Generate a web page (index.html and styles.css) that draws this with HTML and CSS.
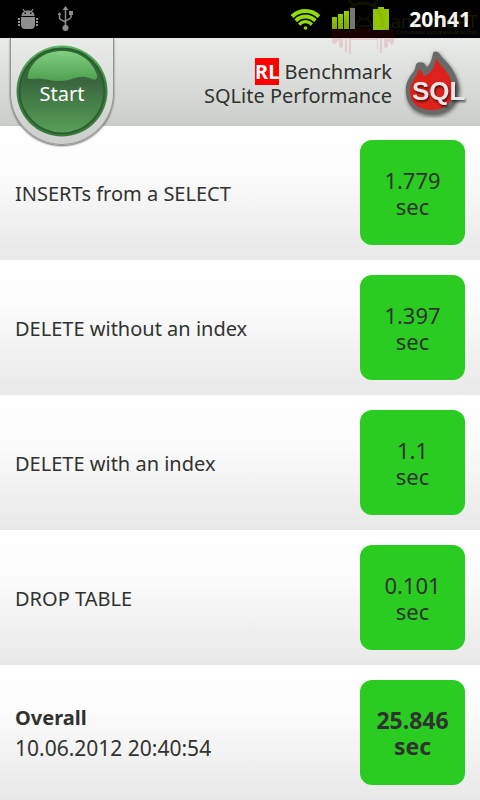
FILE: index.html
```html
<!DOCTYPE html>
<html lang="en">

<head>
    <meta charset="UTF-8">
    <meta name="viewport" content="width=device-width, initial-scale=1.0">
    <title>RL Benchmark: SQLite Performance</title>
    <link rel="stylesheet" href="styles.css">
</head>

<body>

    <div class="status-bar">
        <svg class="status-debug" width="20" height="22" viewBox="0 0 20 22" fill="#8e8e8e" aria-hidden="true">
            <path d="M5 1l2 3M15 1l-2 3" stroke="#8e8e8e" stroke-width="1.2"/>
            <path d="M3.500 8c0-3.500 2.500-5.500 6.500-5.500s6.500 2 6.500 5.500z"/>
            <path d="M3 9h14v8c0 2.500-2 4-4 4H7c-2 0-4-1.500-4-4z"/>
            <path d="M0 10h2v2H0zM0 13h2v2H0zM0 16h2v2H0zM18 10h2v2h-2zM18 13h2v2h-2zM18 16h2v2h-2z"/>
            <path d="M6.500 4.500H8V6H6.500zM12 4.500h1.500V6H12z" fill="#000"/>
        </svg>
        <svg class="status-usb" width="18" height="26" viewBox="0 0 18 26" fill="#8e8e8e" aria-hidden="true">
            <path d="M8.500 3v18M2.500 8v4c0 3 6 2 6 5M14 7v4c0 3-5.500 2-5.500 5" fill="none" stroke="#8e8e8e" stroke-width="1.500"/>
            <path d="M8.500 0l3 4h-6zM2.500 6l2 3h-4zM12 5h4v4h-4z"/>
            <circle cx="8.500" cy="22" r="3"/>
        </svg>
        <span class="status-space"></span>
        <svg class="status-wifi" width="30" height="24" viewBox="0 0 30 24" aria-hidden="true">
            <clipPath id="wedge">
                <path d="M14.500 25L-2 6V0h33v6z"/>
            </clipPath>
            <g clip-path="url(#wedge)" fill="none" stroke="#94dc08">
                <circle cx="14.500" cy="23" r="19" stroke-width="4"/>
                <circle cx="14.500" cy="23" r="13.500" stroke-width="3.800"/>
                <circle cx="14.500" cy="23" r="8.300" stroke-width="3.200"/>
            </g>
            <circle cx="14.500" cy="21" r="1.800" fill="#94dc08"/>
        </svg>
        <svg class="status-signal" width="24" height="22" viewBox="0 0 24 22" aria-hidden="true">
            <linearGradient id="lime" x1="0" y1="0" x2="0" y2="1">
                <stop offset="0" stop-color="#9ad60c"/>
                <stop offset="1" stop-color="#7cac06"/>
            </linearGradient>
            <path d="M0 9h5v12H0zM6 6h5v15H6zM12 3h5v18h-5z" fill="url(#lime)"/>
            <path d="M18 0h5v21h-5z" fill="#777"/>
        </svg>
        <svg class="status-battery" width="16" height="24" viewBox="0 0 16 24" aria-hidden="true">
            <path d="M5 0h6v2h5v21H0V2h5z" fill="#8fc400"/>
        </svg>
        <span class="clock">20h41</span>
    </div>

    <svg class="watermark" width="150" height="56" viewBox="0 0 150 56" aria-hidden="true">
        <g fill="none" stroke="#6d7a00" stroke-width="3" opacity="0.14">
            <path d="M16 27c-2-14 5-24 17-24s21 10 19 24M19 0l5 6M48 0l-5 6"/>
            <path d="M27 26c0-10 14-10 14 0zM29 16l2 3M39 16l-2 3" stroke-width="2"/>
        </g>
        <g fill="#d00018" opacity="0.12">
            <path d="M1 29c8-3 13 4 20 2 6-4 18-4 26 0 6 0 8-4 17-2v13c0 4-4 4-4 0h-2v3c0 4-4 4-4 0v-6h-2v14h-2V39h-2v10h-1V40H21v14h-2V39h-2v13h-2V39h-2v6c0 4-4 4-4 0v-4H7c0 4-5 4-5 0z"/>
        </g>
        <text class="watermark-name" x="61" y="28">androidPT</text>
        <text class="watermark-line" x="67" y="34">Comunidade portuguesa de android</text>
    </svg>

    <header>
        <button class="start-btn" type="button">
            <svg class="orb" width="92" height="92" viewBox="0 0 92 92" aria-hidden="true">
                <linearGradient id="rim" x1="0" y1="0" x2="0" y2="1">
                    <stop offset="0" stop-color="#5db463"/>
                    <stop offset="0.5" stop-color="#3f8044"/>
                    <stop offset="1" stop-color="#3c7a3f"/>
                </linearGradient>
                <linearGradient id="glass" x1="0" y1="0" x2="0" y2="1">
                    <stop offset="0" stop-color="#2e6a33"/>
                    <stop offset="0.4" stop-color="#3a673d"/>
                    <stop offset="1" stop-color="#58a159"/>
                </linearGradient>
                <linearGradient id="shine" x1="0" y1="0" x2="0" y2="1">
                    <stop offset="0" stop-color="#80cf80"/>
                    <stop offset="1" stop-color="#4ea04f"/>
                </linearGradient>
                <circle cx="46" cy="46" r="45.500" fill="url(#rim)"/>
                <circle cx="46" cy="46" r="42.500" fill="url(#glass)" stroke="#2c5f30" stroke-width="2"/>
                <path d="M12 30C16 15 29 6 46 6s30 9 35 24c1 4-2 6-5 4-14-6-18 2-32 2-12 0-18-4-29-2-3 0-4-1-3-4z" fill="url(#shine)"/>
            </svg>
            <span class="start-label">Start</span>
        </button>
        <h1><span class="brand">RL</span> Benchmark<br>SQLite Performance</h1>
        <svg class="logo" width="64" height="68" viewBox="0 0 64 68" role="img" aria-label="SQL">
            <path class="flame-edge" d="M29 3c1-2 4-2 6 0 3 5 9 9 13 16 5 8 8 16 6 25-2 12-12 20-25 20C12 64 3 56 2 43c-1-10 3-16 8-22 2-3 1-6 3-8 2-1 5-1 7 0l3 4c4-3 5-9 6-14z"/>
            <path d="M32 8c4 8 11 12 14 20 8 18-1 32-17 32C13 60 6 52 6 42c0-11 7-14 9-23 3 2 4 3 4 7 8-1 12-9 13-18z" fill="#df211b"/>
            <text class="logo-text" x="8" y="50">SQL</text>
        </svg>
    </header>

    <table class="results">
        <tbody>
            <tr>
                <th scope="row">INSERTs from a SELECT</th>
                <td><div class="time">1.779<br>sec</div></td>
            </tr>
            <tr>
                <th scope="row">DELETE without an index</th>
                <td><div class="time">1.397<br>sec</div></td>
            </tr>
            <tr>
                <th scope="row">DELETE with an index</th>
                <td><div class="time">1.1<br>sec</div></td>
            </tr>
            <tr>
                <th scope="row">DROP TABLE</th>
                <td><div class="time">0.101<br>sec</div></td>
            </tr>
            <tr class="overall">
                <th scope="row"><strong>Overall</strong><br><span class="date">10.06.2012 20:40:54</span></th>
                <td><div class="time">25.846<br>sec</div></td>
            </tr>
        </tbody>
    </table>

</body>

</html>
```

FILE: styles.css
```css
body {
    font-family: "Noto Sans", sans-serif;
    font-size: 20px;
    color: #303230;
    background-color: #fff;
    margin: 0;
    position: relative;
}

.status-bar {
    display: flex;
    align-items: center;
    height: 38px;
    padding: 0 9px 0 18px;
    box-sizing: border-box;
    background-color: #000;
    color: #fff;
}

.status-usb {
    margin-left: 19px;
}

.status-space {
    flex: 1;
}

.status-signal {
    margin-left: 11px;
}

.status-battery {
    margin-left: 17px;
}

.clock {
    margin-left: 20px;
    font-size: 21px;
    font-weight: bold;
}

/* faint badge that runs over the status bar and the header */
.watermark {
    position: absolute;
    top: 0;
    right: 0;
    z-index: 1;
    pointer-events: none;
}

.watermark-name {
    font-size: 18px;
    fill: #6d7a00;
    opacity: 0.2;
}

.watermark-line {
    font-family: "Liberation Sans", sans-serif;
    font-size: 5px;
    fill: #6d7a00;
    opacity: 0.3;
}

header {
    display: flex;
    align-items: center;
    justify-content: flex-end;
    gap: 12px;
    height: 87px;
    padding: 4px 12px 0 0;
    position: relative;
    box-sizing: border-box;
    background: linear-gradient(#e8ebe8, #cccecb);
    box-shadow: 0 1px #c9cbc8;
}

h1 {
    margin: 0;
    font-size: 20px;
    font-weight: normal;
    line-height: 24px;
    text-align: right;
}

.brand {
    background-color: #f00;
    color: #fff;
    font-weight: bold;
}

.flame-edge {
    fill: #686a69;
    filter: drop-shadow(1px 2px 2px rgba(0, 0, 0, 0.6));
}

.logo-text {
    font-family: "Liberation Sans", sans-serif;
    font-size: 26px;
    font-weight: bold;
    fill: #e6e6ea;
    filter: drop-shadow(1px 2px 1px rgba(0, 0, 0, 0.6));
}

/* hangs below the header, over the first row */
.start-btn {
    display: grid;
    place-items: center;
    position: absolute;
    top: 0;
    left: 10px;
    width: 104px;
    height: 107px;
    padding: 0;
    border: 1px solid #949694;
    border-top: 0;
    border-radius: 0 0 52px 52px;
    background: linear-gradient(#e8ebe8, #cccecb);
    box-shadow: 0 1px 2px rgba(0, 0, 0, 0.6);
    clip-path: inset(0 -4px -4px);
    color: #fff;
    font-family: inherit;
    font-size: 20px;
    cursor: pointer;
}

.orb,
.start-label {
    grid-area: 1 / 1;
}

.start-label {
    padding-top: 4px;
}

.results {
    width: 100%;
    border-collapse: collapse;
}

.results tr {
    background: linear-gradient(#fff, #fcfcfc 33%, #e8e8e8);
}

.results th {
    padding: 2px 15px 0;
    font-weight: normal;
    line-height: 30px;
    text-align: left;
}

.results td {
    width: 105px;
    padding: 15px;
}

.time {
    display: flex;
    align-items: center;
    justify-content: center;
    height: 105px;
    border-radius: 12px;
    background-color: #2bcc22;
    font-size: 22px;
    line-height: 26px;
    text-align: center;
}

.date {
    font-size: 21px;
}

.overall .time {
    font-size: 23px;
    font-weight: bold;
}
```
